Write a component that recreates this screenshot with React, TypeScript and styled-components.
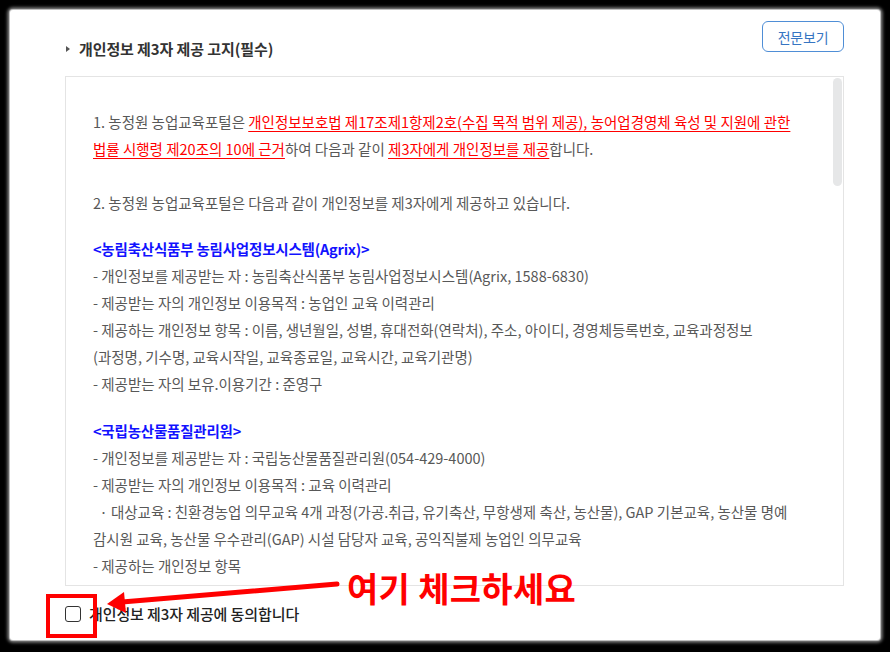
import React from 'react';
import styled, { createGlobalStyle } from 'styled-components';

const GlobalStyle = createGlobalStyle`
    * { box-sizing: border-box; }
    html, body {
        margin: 0;
        padding: 0;
        background: #000;
    }
    body {
        font-family: "Noto Sans CJK KR", "Noto Sans", sans-serif;
    }
`

const Page = styled.div`
    width: 890px;
    height: 652px;
    padding: 10px;
    background: #000;
`

const Paper = styled.div`
    position: relative;
    width: 870px;
    height: 630px;
    background: #fff;
    border-radius: 3px;
    box-shadow: 0 0 1px 1px #c8c8c8, 0 0 3px 3px #6a6a6a;
    padding: 11px 36px 0 55px;
`

const Header = styled.div`
    display: flex;
    justify-content: space-between;
    align-items: flex-start;
`

const Title = styled.h3`
    margin: 18px 0 0;
    display: flex;
    align-items: center;
    gap: 9px;
    font-size: 15px;
    line-height: 20px;
    font-weight: 700;
    color: #333;
    letter-spacing: -0.1px;

    &::before {
        content: '';
        display: block;
        width: 0;
        height: 0;
        margin-left: 1px;
        border-top: 3.5px solid transparent;
        border-bottom: 3.5px solid transparent;
        border-left: 4px solid #555;
    }
`

const FullButton = styled.button`
    width: 82px;
    height: 31px;
    border: 1px solid #4f8ed6;
    border-radius: 6px;
    background: #fff;
    color: #3675c2;
    font-family: inherit;
    font-size: 14px;
    letter-spacing: -0.2px;
    cursor: pointer;
`

const TermsFrame = styled.div`
    position: relative;
    margin-top: 17px;
    height: 510px;
    border: 1px solid #e4e4e4;
`

const TermsScroll = styled.div`
    height: 100%;
    overflow-y: auto;
    scrollbar-width: none;

    &::-webkit-scrollbar {
        display: none;
    }
`

const Thumb = styled.div`
    position: absolute;
    top: 1px;
    right: 1px;
    width: 9px;
    height: 108px;
    border-radius: 5px;
    background: #e6e7e8;
`

const Content = styled.div`
    padding: 31px 20px 40px 27px;
    min-height: 2350px;
    font-size: 14.5px;
    line-height: 27px;
    color: #585858;
    letter-spacing: 0;
    white-space: nowrap;
`

const Para = styled.p<{ $gap: number }>`
    margin: 0 0 ${(p) => p.$gap}px;
`

const Law = styled.span`
    color: #ff0000;
    text-decoration: underline;
    text-underline-offset: 3px;
`

const Org = styled.strong`
    display: block;
    color: #1212ff;
    font-weight: 700;
    letter-spacing: -0.2px;
`

const AgreeRow = styled.label`
    margin-top: 20px;
    display: flex;
    align-items: center;
    gap: 8px;
    font-size: 15px;
    font-weight: 500;
    color: #222;
    letter-spacing: -0.1px;
    line-height: 16px;
`

const Check = styled.input`
    appearance: none;
    margin: 0;
    width: 16px;
    height: 16px;
    border: 1.5px solid #333;
    border-radius: 3px;
    background: #fff;
`

const Marker = styled.div`
    position: absolute;
    left: 36px;
    top: 584px;
    width: 51px;
    height: 44px;
    border: 4px solid #ff0000;
`

const Arrow = styled.svg`
    position: absolute;
    left: 0;
    top: 0;
    width: 870px;
    height: 630px;
    pointer-events: none;
`

const Callout = styled.div`
    position: absolute;
    left: 337px;
    top: 560px;
    font-size: 34px;
    line-height: 36px;
    font-weight: 700;
    color: #ff0000;
    letter-spacing: 0.3px;
`

export default function App() {
    return (
        <Page>
            <GlobalStyle />
            <Paper>
                <Header>
                    <Title>개인정보 제3자 제공 고지(필수)</Title>
                    <FullButton>전문보기</FullButton>
                </Header>
                <TermsFrame>
                    <TermsScroll>
                        <Content>
                            <Para $gap={27}>
                                1. 농정원 농업교육포털은 <Law>개인정보보호법 제17조제1항제2호(수집 목적 범위 제공), 농어업경영체 육성 및 지원에 관한</Law>
                                <br />
                                <Law>법률 시행령 제20조의 10에 근거</Law>하여 다음과 같이 <Law>제3자에게 개인정보를 제공</Law>합니다.
                            </Para>
                            <Para $gap={19}>2. 농정원 농업교육포털은 다음과 같이 개인정보를 제3자에게 제공하고 있습니다.</Para>
                            <Para $gap={20}>
                                <Org>&lt;농림축산식품부 농림사업정보시스템(Agrix)&gt;</Org>
                                - 개인정보를 제공받는 자 : 농림축산식품부 농림사업정보시스템(Agrix, 1588-6830)
                                <br />- 제공받는 자의 개인정보 이용목적 : 농업인 교육 이력관리
                                <br />- 제공하는 개인정보 항목 : 이름, 생년월일, 성별, 휴대전화(연락처), 주소, 아이디, 경영체등록번호, 교육과정정보
                                <br />(과정명, 기수명, 교육시작일, 교육종료일, 교육시간, 교육기관명)
                                <br />- 제공받는 자의 보유.이용기간 : 준영구
                            </Para>
                            <Para $gap={20}>
                                <Org>&lt;국립농산물품질관리원&gt;</Org>
                                - 개인정보를 제공받는 자 : 국립농산물품질관리원(054-429-4000)
                                <br />- 제공받는 자의 개인정보 이용목적 : 교육 이력관리
                                <br />&nbsp;&nbsp;· 대상교육 : 친환경농업 의무교육 4개 과정(가공.취급, 유기축산, 무항생제 축산, 농산물), GAP 기본교육, 농산물 명예
                                <br />감시원 교육, 농산물 우수관리(GAP) 시설 담당자 교육, 공익직불제 농업인 의무교육
                                <br />- 제공하는 개인정보 항목
                                <br />&nbsp;&nbsp;· 이름, 생년월일, 휴대전화(연락처), 교육과정정보
                                <br />- 제공받는 자의 보유.이용기간 : 준영구
                            </Para>
                        </Content>
                    </TermsScroll>
                    <Thumb />
                </TermsFrame>
                <AgreeRow>
                    <Check type="checkbox" />
                    개인정보 제3자 제공에 동의합니다
                </AgreeRow>

                <Marker />
                <Arrow viewBox="0 0 870 630">
                    <line x1="327" y1="574" x2="112" y2="592" stroke="#ff0000" strokeWidth="5" strokeLinecap="round" />
                    <polygon points="97,594 114,582 116,603" fill="#ff0000" />
                </Arrow>
                <Callout>여기 체크하세요</Callout>
            </Paper>
        </Page>
    );
}
